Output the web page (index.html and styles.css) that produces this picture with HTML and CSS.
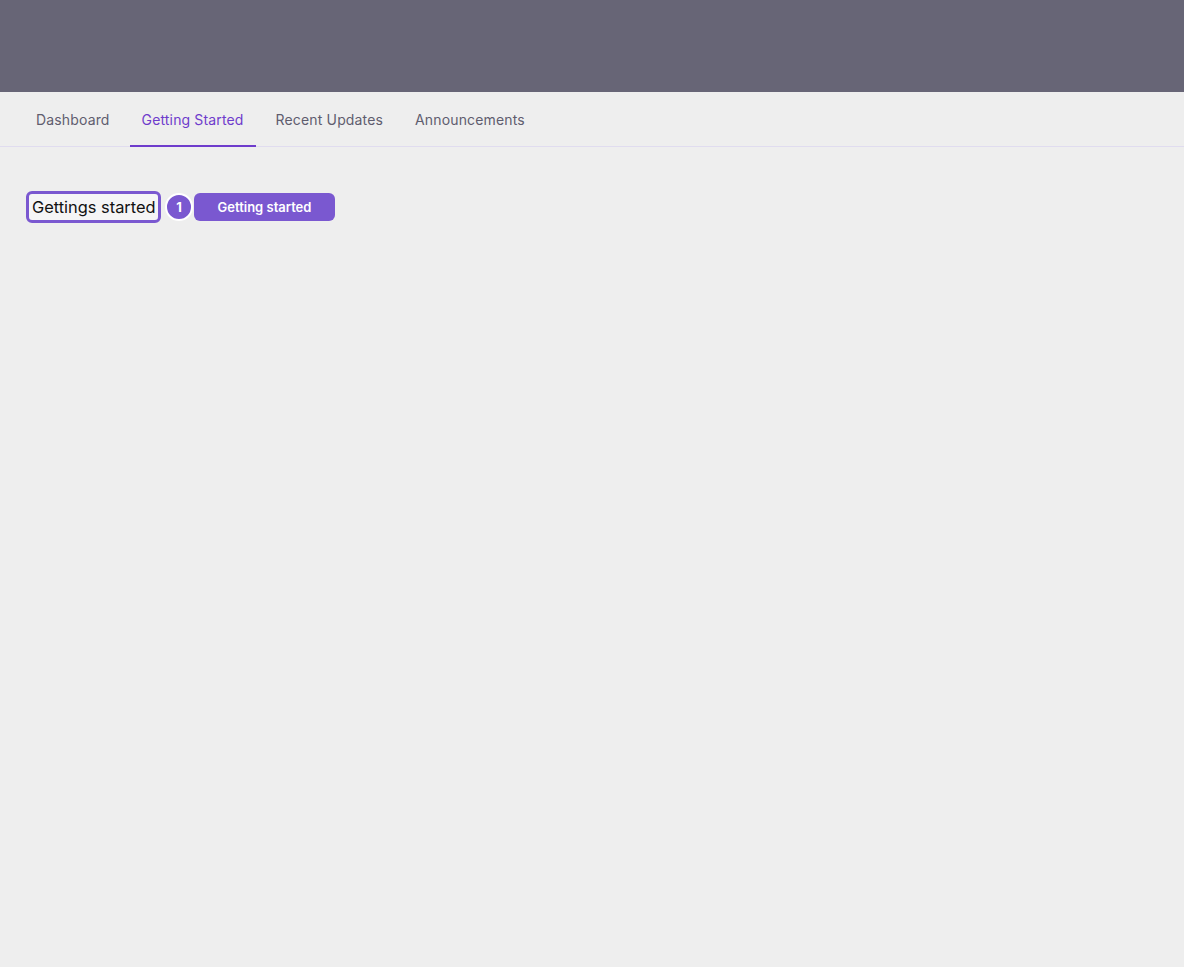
FILE: index.html
```html
<!DOCTYPE html>
<html>
<head>
<meta charset="utf-8">
<link rel="stylesheet" href="styles.css">
</head>
<body>
<header class="topbar"></header>
<nav class="tabs">
  <a class="tab">Dashboard</a>
  <a class="tab active">Getting Started</a>
  <a class="tab">Recent Updates</a>
  <a class="tab">Announcements</a>
</nav>
<main class="content">
  <div class="row">
    <input class="field" type="text" value="Gettings started">
    <span class="badge">1</span>
    <button class="btn">Getting started</button>
  </div>
</main>
</body>
</html>
```
FILE: styles.css
```css
* { box-sizing: border-box; }
html, body { margin: 0; padding: 0; }
body {
  background: #eeeeee;
  font-family: Inter, "Noto Sans", sans-serif;
  width: 1184px;
  height: 967px;
}
.topbar {
  height: 92px;
  background: #676576;
}
.tabs {
  display: flex;
  height: 55px;
  padding-left: 24px;
  border-bottom: 1px solid #e0dcef;
  gap: 8px;
}
.tab {
  display: flex;
  align-items: center;
  padding: 1px 12px 0;
  font-size: 14px;
  letter-spacing: 0.15px;
  color: #5f5d6e;
  margin-bottom: -1px;
  border-bottom: 2px solid transparent;
}
.tab.active {
  color: #6e3ccc;
  border-bottom-color: #6e3ccc;
}
.content {
  padding: 44px 26px;
}
.row {
  display: flex;
  align-items: center;
  gap: 4px;
}
.field {
  width: 135px;
  height: 32px;
  border: 3px solid #7a58d0;
  border-radius: 6px;
  background: #f5f5f6;
  font-family: Inter, "Noto Sans", sans-serif;
  font-size: 16.4px;
  color: #111;
  padding: 0 3px;
  outline: none;
}
.badge {
  width: 28px;
  height: 28px;
  border-radius: 50%;
  border: 2px solid #ffffff;
  background: #7a58d0;
  color: #fff;
  font-size: 13px;
  font-weight: 700;
  display: flex;
  align-items: center;
  justify-content: center;
  margin-right: -3px;
}
.btn {
  width: 141px;
  height: 28px;
  border: none;
  border-radius: 6px;
  background: #7a58d0;
  color: #fff;
  font-family: Inter, "Noto Sans", sans-serif;
  font-size: 13px;
  font-weight: 600;
}
```
